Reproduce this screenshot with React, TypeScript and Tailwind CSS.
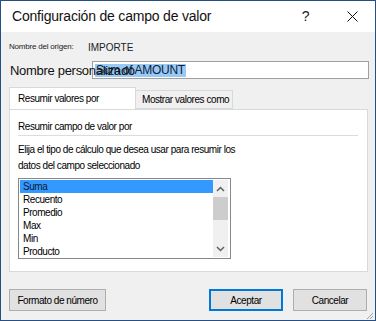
import { useState } from 'react';

const items = ['Suma', 'Recuento', 'Promedio', 'Max', 'Min', 'Producto'];

function Chevron({ up }: { up?: boolean }) {
  return (
    <svg width="9" height="6" viewBox="0 0 9 6" className="text-[#606060]">
      <path
        d={up ? 'M1 5 L4.5 1.5 L8 5' : 'M1 1 L4.5 4.5 L8 1'}
        fill="none"
        stroke="currentColor"
        strokeWidth="1.5"
      />
    </svg>
  );
}

function ListBox() {
  const [selected, setSelected] = useState(0);
  return (
    <div className="flex h-[81px] w-[213px] border border-[#828790] bg-white">
      <ul className="flex-1 pl-[1px] pt-[1px]">
        {items.map((item, i) => (
          <li
            key={item}
            onClick={() => setSelected(i)}
            className={`h-[13px] pl-[3px] leading-[13px] ${
              i === selected ? 'bg-[#3399ff] text-[#0b1a33]' : 'text-black'
            }`}
          >
            {item}
          </li>
        ))}
      </ul>
      <div className="mt-[1px] mb-[1px] mr-[2px] flex w-[15px] flex-col items-center bg-[#f0f0f0]">
        <div className="flex h-[17px] items-center">
          <Chevron up />
        </div>
        <div className="h-[23px] w-full bg-[#cdcdcd]" />
        <div className="flex-1" />
        <div className="flex h-[17px] items-center">
          <Chevron />
        </div>
      </div>
    </div>
  );
}

export default function App() {
  return (
    <div
      className="flex h-[321px] w-[376px] flex-col border border-[#264f86] bg-[#f0f0f0] text-[10px] tracking-[-0.45px] text-black"
      style={{ fontFamily: '"Liberation Sans", Arial, sans-serif' }}
    >
      <header className="flex h-[31px] shrink-0 items-center bg-white pl-[11px] pr-[17px]">
        <span className="text-[14px] tracking-[-0.2px] text-[#111]">Configuración de campo de valor</span>
        <span className="ml-auto mr-[38px] text-[14px] text-[#222]">?</span>
        <svg width="11" height="11" viewBox="0 0 11 11">
          <path d="M0.5 0.5 L10.5 10.5 M10.5 0.5 L0.5 10.5" stroke="#111" strokeWidth="1" />
        </svg>
      </header>

      <div className="flex flex-1 flex-col px-[8px]">
        <div className="flex h-[29px] items-center pt-[1px]">
          <span className="w-[79px] text-[8px] tracking-[-0.2px] text-[#222]">Nombre del origen:</span>
          <span className="text-[10px] tracking-[0px] text-[#222]">IMPORTE</span>
        </div>

        <div className="flex h-[18px] items-center">
          <span className="relative z-10 w-[83px] whitespace-nowrap pl-[1px] pt-[2px] text-[13px] tracking-[-0.3px] text-[#111]">
            Nombre personalizado
          </span>
          <div className="mr-[-2px] flex h-[18px] flex-1 items-center border border-[#a0a0a0] bg-white pl-[2px]">
            <span className="bg-[#99c9f5] px-[1px] text-[12px] leading-[13px] tracking-[-0.3px] text-[#0d1d3a]">
              Sum of AMOUNT
            </span>
          </div>
        </div>

        <div className="mt-[9px] flex h-[21px] items-end">
          <div className="relative z-10 flex h-[22px] w-[127px] items-center border border-b-0 border-[#d9d9d9] bg-white pl-[8px]">
            Resumir valores por
          </div>
          <div className="flex h-[19px] w-[97px] items-center whitespace-nowrap border border-l-0 border-[#d9d9d9] bg-[#f0f0f0] pl-[6px]">
            Mostrar valores como
          </div>
        </div>

        <div className="flex h-[163px] w-[359px] flex-col border border-[#d9d9d9] bg-white px-[8px]">
          <div className="flex h-[25px] items-end pb-[1px]">Resumir campo de valor por</div>
          <div className="h-px w-[340px] bg-[#dcdcdc]" />
          <div className="mt-[6px] leading-[16px]">
            Elija el tipo de cálculo que desea usar para resumir los
            <br />
            datos del campo seleccionado
          </div>
          <div className="mt-[4px]">
            <ListBox />
          </div>
        </div>

        <div className="mt-[17px] flex h-[22px] items-center">
          <button className="h-[22px] w-[97px] border border-[#adadad] bg-[#e1e1e1]">
            Formato de número
          </button>
          <button className="ml-auto h-[22px] w-[74px] border-2 border-[#0078d7] bg-[#e1e1e1]">
            Aceptar
          </button>
          <button className="ml-[10px] h-[22px] w-[74px] border border-[#adadad] bg-[#e1e1e1]">
            Cancelar
          </button>
        </div>
        <div className="flex flex-1 items-end justify-end">
          <svg width="9" height="9" viewBox="0 0 9 9" className="mr-[-7px] mb-[1px]">
            <path d="M8 2 L2 8 M8 5 L5 8" stroke="#a0a0a0" strokeWidth="1" />
          </svg>
        </div>
      </div>
    </div>
  );
}
